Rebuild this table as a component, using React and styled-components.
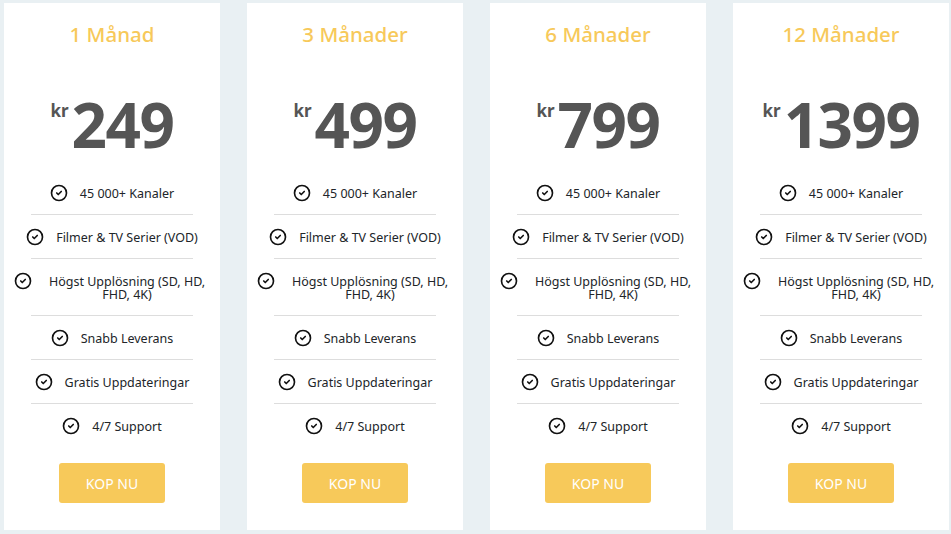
import React from 'react';
import styled, { createGlobalStyle } from 'styled-components';
import { CircleCheck } from 'lucide-react';

const GlobalStyle = createGlobalStyle`
  html, body {
    margin: 0;
    padding: 0;
    background: #e9f0f3;
    font-family: 'Noto Sans', 'Open Sans', sans-serif;
  }
`;

const Page = styled.div`
  display: grid;
  grid-template-columns: repeat(4, 216px);
  column-gap: 27px;
  padding: 3px 0 4px 4px;
  height: 534px;
  box-sizing: border-box;
`;

const Card = styled.div`
  display: flex;
  flex-direction: column;
  align-items: center;
  background: #ffffff;
  padding-top: 17px;
`;

const Title = styled.h3`
  margin: 0;
  font-size: 20.5px;
  font-weight: 500;
  line-height: 28px;
  color: #f7c95a;
`;

const Price = styled.div`
  display: flex;
  align-items: flex-start;
  margin-top: 45px;
  color: #555555;
  font-weight: 700;
`;

const Currency = styled.span`
  font-size: 17px;
  line-height: 20px;
  margin-top: 8px;
  margin-right: 3px;
`;

const Amount = styled.span`
  font-size: 62px;
  line-height: 62px;
  letter-spacing: -1.5px;
`;

const Features = styled.ul`
  list-style: none;
  margin: 16px 0 0;
  padding: 0;
  width: 196px;
`;

const Feature = styled.li`
  display: flex;
  align-items: flex-start;
  justify-content: center;
  gap: 12px;
  padding: 16px 0 15px;
  font-size: 12.5px;
  line-height: 13px;
  color: #212529;
  background: ${(p) =>
    p.last ? 'none' : 'linear-gradient(#dddddd, #dddddd) center bottom / 162px 1px no-repeat'};

  svg {
    flex: none;
    margin: -3px 0 -2px;
  }
`;

const FeatureText = styled.span`
  text-align: center;
`;

const BuyButton = styled.button`
  margin-top: 15px;
  width: 106px;
  height: 40px;
  border: none;
  border-radius: 3px;
  background: #f7c95a;
  color: #ffffff;
  font-family: inherit;
  font-size: 14px;
  cursor: pointer;
`;

const features = [
  '45 000+ Kanaler',
  'Filmer & TV Serier (VOD)',
  'Högst Upplösning (SD, HD, FHD, 4K)',
  'Snabb Leverans',
  'Gratis Uppdateringar',
  '4/7 Support',
];

const plans = [
  { title: '1 Månad', price: '249' },
  { title: '3 Månader', price: '499' },
  { title: '6 Månader', price: '799' },
  { title: '12 Månader', price: '1399' },
];

const App = () => {
  return (
    <>
      <GlobalStyle />
      <Page>
        {plans.map((plan) => (
          <Card key={plan.title}>
            <Title>{plan.title}</Title>
            <Price>
              <Currency>kr</Currency>
              <Amount>{plan.price}</Amount>
            </Price>
            <Features>
              {features.map((f, i) => (
                <Feature key={f} last={i === features.length - 1}>
                  <CircleCheck size={18} strokeWidth={2.2} color="#111" />
                  <FeatureText>{f}</FeatureText>
                </Feature>
              ))}
            </Features>
            <BuyButton>KOP NU</BuyButton>
          </Card>
        ))}
      </Page>
    </>
  );
};

export default App;
